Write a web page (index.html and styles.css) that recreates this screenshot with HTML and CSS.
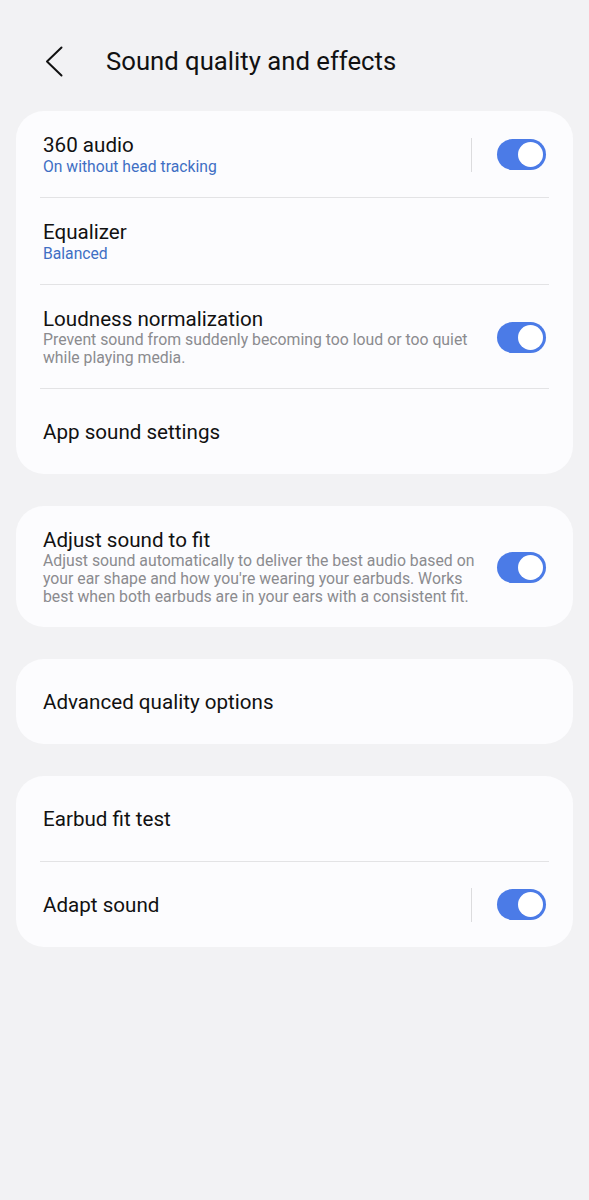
FILE: index.html
```html
<!DOCTYPE html>
<html lang="en">
<head>
    <meta charset="UTF-8">
    <meta name="viewport" content="width=device-width, initial-scale=1.0">
    <title>Sound quality and effects</title>
    <link rel="stylesheet" href="styles.css">
</head>
<body>
    <header class="top-bar">
        <button class="back-btn" type="button" aria-label="Back">
            <svg width="18" height="31" viewBox="0 0 18 31">
                <polyline points="16.5,1.5 2,15.5 16.5,29.5" fill="none" stroke="#111" stroke-width="2" stroke-linecap="round" stroke-linejoin="round"/>
            </svg>
        </button>
        <h1>Sound quality and effects</h1>
    </header>

    <section class="card">
        <div class="row">
            <div class="row-text">
                <p class="row-title">360 audio</p>
                <p class="row-sub">On without head tracking</p>
            </div>
            <span class="split"></span>
            <span class="switch on"></span>
        </div>
        <div class="row">
            <div class="row-text">
                <p class="row-title">Equalizer</p>
                <p class="row-sub">Balanced</p>
            </div>
        </div>
        <div class="row">
            <div class="row-text">
                <p class="row-title">Loudness normalization</p>
                <p class="row-desc">Prevent sound from suddenly becoming too loud or too quiet while playing media.</p>
            </div>
            <span class="switch on"></span>
        </div>
        <div class="row single">
            <div class="row-text">
                <p class="row-title">App sound settings</p>
            </div>
        </div>
    </section>

    <section class="card">
        <div class="row">
            <div class="row-text">
                <p class="row-title">Adjust sound to fit</p>
                <p class="row-desc">Adjust sound automatically to deliver the best audio based on your ear shape and how you're wearing your earbuds. Works best when both earbuds are in your ears with a consistent fit.</p>
            </div>
            <span class="switch on"></span>
        </div>
    </section>

    <section class="card">
        <div class="row single">
            <div class="row-text">
                <p class="row-title">Advanced quality options</p>
            </div>
        </div>
    </section>

    <section class="card">
        <div class="row single">
            <div class="row-text">
                <p class="row-title">Earbud fit test</p>
            </div>
        </div>
        <div class="row single">
            <div class="row-text">
                <p class="row-title">Adapt sound</p>
            </div>
            <span class="split"></span>
            <span class="switch on"></span>
        </div>
    </section>
</body>
</html>
```

FILE: styles.css
```css
body {
    font-family: Roboto, "Noto Sans", sans-serif;
    margin: 0;
    padding: 0 16px 40px;
    background-color: #f2f2f4;
    color: #111;
}

p {
    margin: 0;
}

.top-bar {
    display: flex;
    align-items: center;
    height: 30px;
    padding-top: 46px;
    margin-bottom: 35px;
}

.top-bar h1 {
    margin: 0 0 0 43px;
    font-size: 25.7px;
    font-weight: 400;
    line-height: 30px;
    color: #111;
}

.back-btn {
    display: flex;
    align-items: center;
    background: none;
    border: none;
    padding: 0;
    margin-left: 29px;
    cursor: pointer;
}

.card {
    background-color: #fcfcfe;
    border-radius: 28px;
    padding: 0 24px;
    margin-bottom: 32px;
}

.row {
    display: flex;
    align-items: center;
    padding: 22px 3px 21px;
    border-bottom: 1px solid #e3e3e5;
}

.row:last-child {
    border-bottom: none;
}

.row.single {
    box-sizing: border-box;
    min-height: 86px;
    padding-top: 0;
    padding-bottom: 0;
}

.row.single:last-child {
    min-height: 85px;
}

.row-text {
    flex: 1;
    min-width: 0;
}

.row-title {
    font-size: 20.6px;
    line-height: 24px;
}

.row-sub {
    font-size: 15.7px;
    line-height: 19px;
    color: #3f6fc4;
}

.row-desc {
    font-size: 15.8px;
    line-height: 18px;
    color: #8b8b8f;
}

.split {
    width: 1px;
    height: 34px;
    background-color: #dcdcde;
    margin-right: 25px;
}

.switch {
    flex: none;
    position: relative;
    width: 49px;
    height: 31px;
    border-radius: 16px;
    background-color: #4b7be7;
    margin-left: 22px;
}

.split + .switch {
    margin-left: 0;
}

.switch.on::after {
    content: "";
    position: absolute;
    top: 3px;
    right: 3px;
    width: 25px;
    height: 25px;
    border-radius: 50%;
    background-color: #fff;
}
```
